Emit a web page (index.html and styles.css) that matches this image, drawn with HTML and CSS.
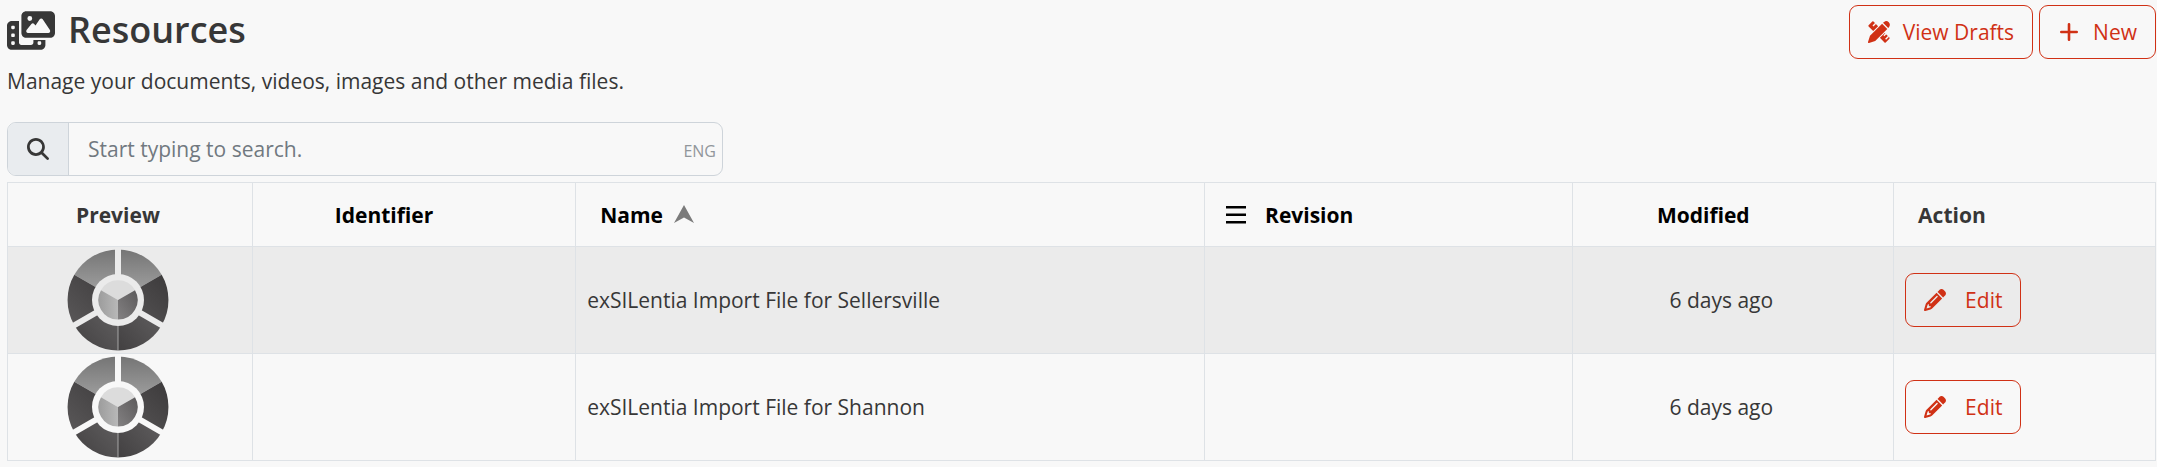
FILE: index.html
```html
<!DOCTYPE html>
<html lang="en">
<head>
<meta charset="utf-8">
<title>Resources</title>
<link rel="stylesheet" href="styles.css">
</head>
<body>
<svg class="defs" aria-hidden="true">
  <defs>
    <linearGradient id="g-top" x1="0" y1="0" x2="0" y2="1"><stop offset="0" stop-color="#757575"/><stop offset="1" stop-color="#a8a8a8"/></linearGradient>
    <linearGradient id="g-side" x1="0" y1="1" x2="1" y2="0"><stop offset="0" stop-color="#5a5859"/><stop offset="1" stop-color="#3c3a3b"/></linearGradient>
    <linearGradient id="g-low" x1="0" y1="1" x2="1" y2="0"><stop offset="0" stop-color="#424041"/><stop offset="1" stop-color="#656364"/></linearGradient>
    <linearGradient id="g-left" x1="0" y1="0" x2="1" y2="0"><stop offset="0" stop-color="#9c9c9c"/><stop offset="1" stop-color="#b8b8b8"/></linearGradient>
    <linearGradient id="g-right" x1="0" y1="1" x2="1" y2="0"><stop offset="0" stop-color="#838182"/><stop offset="1" stop-color="#5c5a5b"/></linearGradient>
    <mask id="ring">
      <rect x="-51" y="-51" width="102" height="102" fill="#fff"/>
      <circle r="26" fill="#000"/>
      <path d="M0 0V-52M0 0L-45 26M0 0L45 26" stroke="#000" stroke-width="6"/>
    </mask>
    <symbol id="wheel" viewBox="-51 -51 102 102">
      <g mask="url(#ring)">
        <path d="M0 0V-50.500A50.500 50.500 0 0 0 -43.700 -25.200Z" fill="url(#g-top)"/>
        <path d="M0 0V-50.500A50.500 50.500 0 0 1 43.700 -25.200Z" fill="url(#g-top)"/>
        <path d="M0 0L-43.700 -25.200A50.500 50.500 0 0 0 -43.700 25.200Z" fill="url(#g-side)"/>
        <path d="M0 0L43.700 -25.200A50.500 50.500 0 0 1 43.700 25.200Z" fill="url(#g-side)"/>
        <path d="M0 0L-43.700 25.200A50.500 50.500 0 0 0 0 50.500Z" fill="url(#g-low)"/>
        <path d="M0 0L43.700 25.200A50.500 50.500 0 0 1 0 50.500Z" fill="url(#g-low)"/>
        <path d="M0 26V51" stroke="#bbb" stroke-width=".8"/>
      </g>
      <path d="M0 0L-17 -9.800A19.600 19.600 0 0 1 17 -9.800Z" fill="#dcdcdc"/>
      <path d="M0 0L-17 -9.800A19.600 19.600 0 0 0 0 19.600Z" fill="url(#g-left)"/>
      <path d="M0 0L17 -9.800A19.600 19.600 0 0 1 0 19.600Z" fill="url(#g-right)"/>
    </symbol>
    <symbol id="pencil" viewBox="0 0 512 512"><path d="M410.300 231l11.300-11.300-33.900-33.900-62.100-62.100L291.700 89.800l-11.300 11.300-22.600 22.600L58.600 322.900c-10.400 10.400-18 23.300-22.200 37.400L1 480.700c-2.500 8.400-.2 17.500 6.100 23.700s15.300 8.500 23.700 6.100l120.300-35.400c14.100-4.200 27-11.800 37.400-22.200L387.700 253.700 410.300 231zM160 399.400l-9.100 22.700c-4 3.100-8.500 5.400-13.300 6.900L59.400 452l23-78.100c1.400-4.900 3.800-9.400 6.900-13.300l22.700-9.100v32c0 8.800 7.200 16 16 16h32zM362.700 18.700L348.300 33.200 325.700 55.800 314.300 67.100l33.900 33.900 62.100 62.100 33.900 33.900 11.300-11.300 22.600-22.600 14.500-14.500c25-25 25-65.500 0-90.500L453.300 18.700c-25-25-65.500-25-90.500 0zm-47.400 168l-144 144c-6.200 6.200-16.400 6.200-22.600 0s-6.200-16.400 0-22.600l144-144c6.200-6.200 16.400-6.200 22.600 0s6.200 16.400 0 22.600z"/></symbol>
  </defs>
</svg>

<header class="page-head">
  <div>
    <h1 class="title">
      <svg class="title-icon" viewBox="0 0 640 512" aria-hidden="true"><path d="M256 0H576c35.300 0 64 28.700 64 64V288c0 35.300-28.700 64-64 64H256c-35.300 0-64-28.700-64-64V64c0-35.300 28.700-64 64-64zM476 106.700C471.500 100 464 96 456 96s-15.500 4-20 10.700l-56 84L362.700 169c-4.600-5.700-11.500-9-18.700-9s-14.200 3.300-18.700 9l-64 80c-5.800 7.200-6.900 17.100-2.900 25.400s12.400 13.600 21.600 13.600h80 48H552c8.900 0 17-4.900 21.200-12.700s3.700-17.300-1.200-24.600l-96-144zM336 96a32 32 0 1 0 -64 0 32 32 0 1 0 64 0zM64 128h96V384v32c0 17.700 14.300 32 32 32H320c17.700 0 32-14.300 32-32V384H512v64c0 35.300-28.700 64-64 64H64c-35.300 0-64-28.700-64-64V192c0-35.300 28.700-64 64-64zm8 64c-8.800 0-16 7.200-16 16v16c0 8.800 7.200 16 16 16H88c8.800 0 16-7.200 16-16V208c0-8.800-7.200-16-16-16H72zm0 104c-8.800 0-16 7.200-16 16v16c0 8.800 7.200 16 16 16H88c8.800 0 16-7.200 16-16V312c0-8.800-7.200-16-16-16H72zm0 104c-8.800 0-16 7.200-16 16v16c0 8.800 7.200 16 16 16H88c8.800 0 16-7.200 16-16V416c0-8.800-7.200-16-16-16H72zm336 16v16c0 8.800 7.200 16 16 16h16c8.800 0 16-7.200 16-16V416c0-8.800-7.200-16-16-16H424c-8.800 0-16 7.200-16 16z"/></svg>
      Resources
    </h1>
    <p class="lead">Manage your documents, videos, images and other media files.</p>
  </div>
  <div class="actions">
    <button class="btn" type="button">
      <svg class="icon" viewBox="0 0 22 22" aria-hidden="true">
        <path d="M5.500 .6L10.100 5.200 5.200 10.100.6 5.500Q0 4.900.6 4.300L4.300.6Q4.900 0 5.500 .6ZM16.800 11.900L21.400 16.500Q22 17.100 21.400 17.700L17.700 21.400Q17.100 22 16.500 21.400L11.900 16.800Z"/>
        <path d="M7.700 2.300L5 5M18 12.600L15.900 14.700M20.600 15.200L17.600 18.200" stroke="#f8f8f8" stroke-width="1.400"/>
        <path d="M14.100 2.700L19.300 7.900 7.200 20 1 22Q-.2 22.200 0 21L2 14.800ZM15 1.800L16.100 .9Q18.400-.8 20.800 1.200 22.800 3.600 21.100 5.900L20.200 7Z"/>
      </svg>
      View Drafts
    </button>
    <button class="btn" type="button">
      <svg class="icon" viewBox="0 0 22 22" aria-hidden="true"><path d="M11 3.300V18.700M3.300 11H18.700" fill="none" stroke="currentColor" stroke-width="2.600" stroke-linecap="round"/></svg>
      New
    </button>
  </div>
</header>

<form class="search">
  <label class="search-label" for="q" aria-label="Search">
    <svg class="icon" viewBox="0 0 512 512" aria-hidden="true"><path d="M416 208c0 45.900-14.900 88.300-40 122.700L502.600 457.400c12.500 12.500 12.500 32.800 0 45.300s-32.800 12.500-45.300 0L330.700 376c-34.400 25.200-76.800 40-122.700 40C93.100 416 0 322.900 0 208S93.100 0 208 0S416 93.100 416 208zM208 352a144 144 0 1 0 0-288 144 144 0 1 0 0 288z"/></svg>
  </label>
  <input class="search-input" id="q" type="text" placeholder="Start typing to search.">
  <span class="lang">ENG</span>
</form>

<table class="grid">
  <colgroup><col class="c-preview"><col class="c-ident"><col class="c-name"><col class="c-rev"><col class="c-mod"><col class="c-act"></colgroup>
  <thead>
    <tr>
      <th class="center plain">Preview</th>
      <th class="center sortable">Identifier</th>
      <th>Name <svg class="sort" viewBox="0 0 20 18" aria-hidden="true"><path d="M10 0L20 18 10 12.500 0 18Z"/></svg></th>
      <th class="with-menu"><svg class="menu" viewBox="0 0 20 18" aria-hidden="true"><path d="M0 0H20V2.500H0ZM0 7.500H20V10H0ZM0 15H20V17.500H0Z"/></svg>Revision</th>
      <th class="center sortable">Modified</th>
      <th class="plain">Action</th>
    </tr>
  </thead>
  <tbody>
    <tr>
      <td class="center"><svg class="preview" role="img" aria-label="Preview"><use href="#wheel"/></svg></td>
      <td></td>
      <td>exSILentia Import File for Sellersville</td>
      <td></td>
      <td class="center">6 days ago</td>
      <td><button class="btn edit" type="button"><svg class="icon" aria-hidden="true"><use href="#pencil"/></svg>Edit</button></td>
    </tr>
    <tr>
      <td class="center"><svg class="preview" role="img" aria-label="Preview"><use href="#wheel"/></svg></td>
      <td></td>
      <td>exSILentia Import File for Shannon</td>
      <td></td>
      <td class="center">6 days ago</td>
      <td><button class="btn edit" type="button"><svg class="icon" aria-hidden="true"><use href="#pencil"/></svg>Edit</button></td>
    </tr>
  </tbody>
</table>
</body>
</html>
```
FILE: styles.css
```css
* { box-sizing: border-box; }

body {
  margin: 0;
  padding: 5px 1px 0 7px;
  background: #f8f8f8;
  color: #373737;
  font: 21px/32px "Open Sans", "Noto Sans", sans-serif;
}

svg { fill: currentColor; }
.defs { position: absolute; width: 0; height: 0; }
.icon { width: 22px; height: 22px; flex: none; }

.page-head { display: flex; justify-content: space-between; align-items: flex-start; }

.title {
  display: flex;
  align-items: center;
  gap: 13px;
  margin: 0;
  font-size: 36px;
  line-height: 50px;
  font-weight: 600;
}
.title-icon { width: 48px; height: 39px; }
.lead { margin: 4px 0 0; line-height: 44px; }

.actions { display: flex; gap: 6px; }

.btn {
  display: inline-flex;
  align-items: center;
  gap: 13px;
  height: 54px;
  padding: 0 18px;
  border: 1px solid #d03115;
  border-radius: 9px;
  background: transparent;
  color: #d03115;
  font: inherit;
}
.edit { gap: 19px; vertical-align: middle; }

.search {
  display: flex;
  align-items: stretch;
  width: 716px;
  max-width: 100%;
  height: 54px;
  margin: 19px 0 6px;
  border: 1px solid #ced4da;
  border-radius: 9px;
  overflow: hidden;
}
.search-label {
  display: flex;
  align-items: center;
  padding: 0 19px;
  border-right: 1px solid #ced4da;
  background: #e9ecef;
}
.search-input {
  flex: 1;
  min-width: 0;
  padding: 0 19px;
  border: 0;
  outline: 0;
  background: transparent;
  color: inherit;
  font: inherit;
}
.search-input::placeholder { color: #717980; opacity: 1; }
.lang { align-self: center; padding: 3px 6px 0 0; color: #91969b; font-size: 16px; line-height: 20px; }

.grid { width: 100%; table-layout: fixed; border-collapse: collapse; }
.c-preview { width: 11.400%; }
.c-ident { width: 15.050%; }
.c-name { width: 29.280%; }
.c-rev { width: 17.150%; }
.c-mod { width: 14.930%; }

.grid th, .grid td { border: 1px solid #dee2e6; text-align: left; vertical-align: middle; }
.grid th { height: 64px; padding: 0 24px; color: #000; font-weight: 700; }
.grid td { height: 107px; padding: 0 11px; }
.grid th.plain { color: #373737; }
.grid .center { text-align: center; }
.grid th.center { padding: 0 24px 0 0; }
.grid th.sortable { padding-right: 60px; }
.grid td.center { padding: 0 24px 0 0; }
.grid tbody tr:nth-child(odd) { background: #ebebeb; }
.grid th.with-menu { padding-left: 21px; }

.sort { width: 20px; height: 18px; margin-left: 6px; fill: #7b7b7b; }
.menu { width: 20px; height: 18px; margin-right: 19px; vertical-align: -1px; }
.preview { display: block; width: 102px; height: 102px; margin: 0 auto; }
```
